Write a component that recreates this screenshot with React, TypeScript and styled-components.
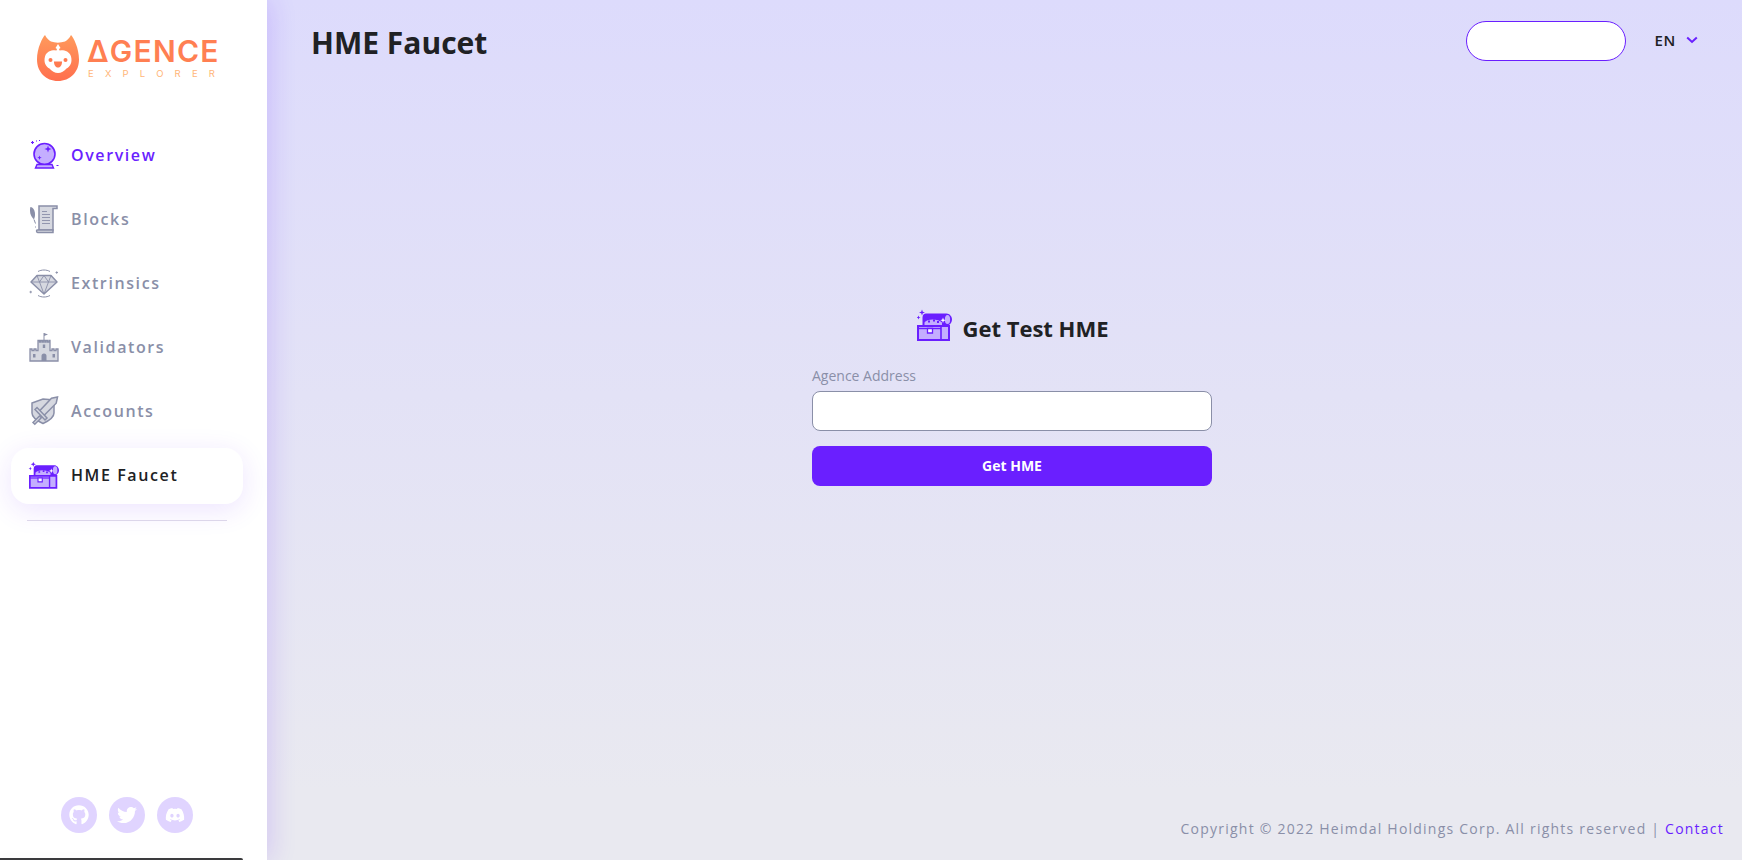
import React from "react";
import styled, { createGlobalStyle } from "styled-components";
import { FaDiscord, FaGithub, FaTwitter } from "react-icons/fa";

const PURPLE = "#6a1fff";
const PURPLE_FILL = "#c4aeff";
const GREY = "#8a8fa8";
const GREY_FILL = "#d6d8e0";

type Tone = { line: string; fill: string };
const purple: Tone = { line: PURPLE, fill: PURPLE_FILL };
const grey: Tone = { line: GREY, fill: GREY_FILL };

const BallIcon = ({ line, fill }: Tone) => (
  <svg width="30" height="30" viewBox="0 0 30 30">
    <circle cx="15.5" cy="14" r="10.5" fill={fill} stroke={line} strokeWidth="1.6" />
    <path d="M19 5.5l.9 2.6 2.6.9-2.6.9-.9 2.6-.9-2.6-2.6-.9 2.6-.9z" fill={line} />
    <path d="M10.5 15.5l.6 1.6 1.6.6-1.6.6-.6 1.6-.6-1.6-1.6-.6 1.6-.6z" fill={line} />
    <path d="M8 24.5h15l1.5 3.5h-18z" fill={fill} stroke={line} strokeWidth="1.4" />
    <path d="M2 2.5h3M3.5 1v3M7 1h1M10 .5h1M27.5 25.5h2" stroke={line} strokeWidth="1.1" />
  </svg>
);

const ScrollIcon = ({ line, fill }: Tone) => (
  <svg width="30" height="30" viewBox="0 0 30 30">
    <path d="M10 2h18v2.500h-4V26H10z" fill={fill} stroke={line} strokeWidth="1.500" />
    <path d="M8 26h16v2.500H9.500A1.500 1.500 0 0 1 8 26z" fill={fill} stroke={line} strokeWidth="1.500" />
    <path d="M13 7.500h5M13 10.500h8M13 13.500h8M13 16.500h8M13 19.500h8" stroke={line} strokeWidth=".9" />
    <path d="M1.500 3c2.800.5 4.500 3.500 4.500 7.500 0 2-.5 3.500-1 5-2.200-2-4-5-4-8.500 0-1.500 0-3 .5-4z" fill={line} />
    <path d="M5 15.500l1.500 4M6 23h1" stroke={line} strokeWidth="1" />
  </svg>
);

const GemIcon = ({ line, fill }: Tone) => (
  <svg width="30" height="30" viewBox="0 0 30 30">
    <path d="M8 7.500h14l6 6.500-13 12L2 14z" fill={fill} stroke={line} strokeWidth="1.500" strokeLinejoin="round" />
    <path d="M2 14h26M10.500 14L15 26l4.500-12M8 7.500l2.500 6.500L15 7.500l4.500 6.500L22 7.500" fill="none" stroke={line} strokeWidth=".9" />
    <path d="M9 3.500c3.500-2 8.500-2 12 0M9 27.500c3.500 2 8.500 2 12 0" fill="none" stroke={line} strokeWidth="1" />
    <path d="M26.500 4.500h2.500M27.700 3.300v2.500M.5 24h2.500M1.700 22.800v2.500" stroke={line} strokeWidth=".9" />
  </svg>
);

const CastleIcon = ({ line, fill }: Tone) => (
  <svg width="30" height="30" viewBox="0 0 30 30">
    <path d="M1 17v12h28V17h-2v1.500h-2V17h-2v1.500h-2V8.500h-1V10h-1.500V8.500H17V10h-1.200V8.500h-1.500V10h-1.200V8.500h-1.500V10H10.500V8.500H9v10H7V17H5v1.500H3V17z" fill={fill} stroke={line} strokeWidth="1.300" />
    <path d="M15 1v7" stroke={line} strokeWidth="1" />
    <path d="M15 1l4 1.500-4 1.500z" fill={line} />
    <path d="M12.500 29v-5a2.500 2.500 0 0 1 5 0v5zM4 22h2.500v3.500H4zM23.500 22H26v3.500h-2.500zM13.800 12.500h2.400v3.500h-2.400z" fill={line} />
  </svg>
);

const ShieldIcon = ({ line, fill }: Tone) => (
  <svg width="30" height="30" viewBox="0 0 30 30">
    <path d="M3 7L14 3l11 1v13c0 4.500-5.500 8-11 10.500C8.500 25 3 22 3 17z" fill={fill} stroke={line} strokeWidth="1.500" />
    <path d="M28.500 1l-1.300 6.200L14 20.500 9.500 16 22.500 2.300z" fill={fill} stroke={line} strokeWidth="1.500" />
    <path d="M6 13.500l2-2 10 10.500-2 2z" fill={fill} stroke={line} strokeWidth="1.500" />
    <path d="M10.500 20L4 26.500l1.800 1.800 6.500-6.500z" fill={fill} stroke={line} strokeWidth="1.500" />
  </svg>
);

const ChestIcon = ({ line, fill }: Tone) => (
  <svg width="100%" height="100%" viewBox="0 0 35 32">
    <path d="M5.500 8.500c0-2.500 1.500-4 3.500-4h20.500c3 0 5.500 3 5.500 6s-2.500 6-5.500 6H5.500z" fill={line} />
    <ellipse cx="30.500" cy="10.500" rx="2.600" ry="4.600" fill={fill} />
    <path d="M7.500 13.500c2-4 14-4 17.500 0v3H7.500z" fill={fill} />
    <path d="M11 11.500h2v2h-2zM16 10.500h2v2h-2zM20 12h2v2h-2z" fill={line} />
    <path d="M1 17h31v14H1z" fill={fill} stroke={line} strokeWidth="2" />
    <path d="M24 17v14" stroke={line} strokeWidth="1.600" />
    <path d="M1 19.500h23" stroke={line} strokeWidth="1.400" />
    <path d="M10.500 19.500h5v4.500h-5z" fill="#fff" stroke={line} strokeWidth="1.300" />
    <path d="M5 .5l.8 2.200 2.200.8-2.200.8L5 6.500l-.8-2.200-2.200-.8 2.200-.8zM1.500 6.500l.6 1.500 1.400.5-1.400.5-.6 1.500-.6-1.500L-.5 8.500l1.400-.5z" fill={line} />
    <path d="M26 8.500l.7 2 2 .7-2 .7-.7 2-.7-2-2-.7 2-.7z" fill="#fff" />
  </svg>
);

const navItems = [
  { label: "Overview", Icon: BallIcon, tone: purple, state: "current" },
  { label: "Blocks", Icon: ScrollIcon, tone: grey, state: "idle" },
  { label: "Extrinsics", Icon: GemIcon, tone: grey, state: "idle" },
  { label: "Validators", Icon: CastleIcon, tone: grey, state: "idle" },
  { label: "Accounts", Icon: ShieldIcon, tone: grey, state: "idle" },
  { label: "HME Faucet", Icon: ChestIcon, tone: purple, state: "active" },
];

const App = () => {
  return (
    <Page>
      <GlobalStyle />
      <Sidebar>
        <LogoRow>
          <svg width="42" height="46" viewBox="0 0 42 46">
            <defs>
              <linearGradient id="catFill" x1="0" y1="0" x2="0" y2="1">
                <stop offset="0" stopColor="#ff9a5c" />
                <stop offset="1" stopColor="#ff6f4e" />
              </linearGradient>
            </defs>
            <path d="M8 0c1.500 3 4 5.500 6 6.500 4 1.500 9.500 1.500 14 0 2-1 4.500-3.500 6-6.500 2.500 2.500 8 13 8 24.500C42 37 33 46 21 46S0 37 0 24.500C0 13 5.500 2.500 8 0z" fill="url(#catFill)" />
            <path d="M21 16c3-1.500 11-1 13 5.500 1.500 5.500-.5 10-4.500 12-2 2.500-5.500 4.500-8.500 4.500s-6.500-2-8.500-4.500c-4-2-6-6.500-4.500-12C10 15 18 14.500 21 16z" fill="#fff" />
            <path d="M21 9l2.500 4-1.500 1 1 3-2 2-2-2 1-3-1.500-1z" fill="#fff" />
            <circle cx="13.500" cy="25" r="2" fill="#ff7a50" />
            <circle cx="28.500" cy="25" r="2" fill="#ff7a50" />
            <path d="M17 26.500h8c0 4-2 6-4 6s-4-2-4-6z" fill="#ff7a50" />
          </svg>
          <Wordmark>
            <BrandName>ΔGENCE</BrandName>
            <BrandSub>EXPLORER</BrandSub>
          </Wordmark>
        </LogoRow>
        <Nav>
          {navItems.map(({ label, Icon, tone, state }) => (
            <NavRow key={label} $state={state}>
              <NavIcon>
                <Icon {...tone} />
              </NavIcon>
              {label}
            </NavRow>
          ))}
        </Nav>
        <Divider />
        <Socials>
          <SocialLink><FaGithub /></SocialLink>
          <SocialLink><FaTwitter /></SocialLink>
          <SocialLink><FaDiscord /></SocialLink>
        </Socials>
        <BottomStrip />
      </Sidebar>
      <Main>
        <Header>
          <Title>HME Faucet</Title>
          <HeaderRight>
            <WalletPill />
            <LangSwitch>
              EN
              <svg width="12" height="8" viewBox="0 0 12 8">
                <path d="M1.200 1.500L6 6l4.800-4.500" fill="none" stroke={PURPLE} strokeWidth="2" />
              </svg>
            </LangSwitch>
          </HeaderRight>
        </Header>
        <Center>
          <FaucetForm>
            <FormHeading>
              <HeadingIcon>
                <ChestIcon {...purple} />
              </HeadingIcon>
              Get Test HME
            </FormHeading>
            <FieldLabel>Agence Address</FieldLabel>
            <AddressInput />
            <SubmitButton>Get HME</SubmitButton>
          </FaucetForm>
        </Center>
        <Footer>
          Copyright © 2022 Heimdal Holdings Corp. All rights reserved | <FooterLink>Contact</FooterLink>
        </Footer>
      </Main>
    </Page>
  );
};

const GlobalStyle = createGlobalStyle`
  html, body {
    margin: 0;
    height: 100%;
    overflow: hidden;
  }
  body {
    font-family: "Open Sans", "Liberation Sans", sans-serif;
  }
`;

const Page = styled.div`
  display: flex;
  width: 1742px;
  height: 860px;
  background: linear-gradient(180deg, #dddbfc 0%, #e9e9f0 92%);
`;

const Sidebar = styled.aside`
  position: relative;
  z-index: 1;
  width: 267px;
  flex-shrink: 0;
  display: flex;
  flex-direction: column;
  background: #fff;
  box-shadow: 4px 0 24px rgba(106, 31, 255, 0.16);
`;

const LogoRow = styled.div`
  display: flex;
  align-items: flex-start;
  gap: 8px;
  height: 93px;
  padding: 35px 0 0 37px;
`;

const Wordmark = styled.div`
  display: flex;
  flex-direction: column;
`;

const BrandName = styled.span`
  font-family: "Inter", sans-serif;
  font-size: 30px;
  font-weight: 600;
  line-height: 33px;
  letter-spacing: 1.200px;
  color: #ff7f52;
`;

const BrandSub = styled.span`
  font-family: "Inter", sans-serif;
  font-size: 9.5px;
  line-height: 12px;
  margin: 0 0 0 1px;
  letter-spacing: 11.200px;
  color: #ffb678;
`;

const Nav = styled.nav`
  display: flex;
  flex-direction: column;
  gap: 8px;
`;

const NavRow = styled.a<{ $state: string }>`
  display: flex;
  align-items: center;
  gap: 12px;
  height: 56px;
  width: 232px;
  margin-left: 11px;
  padding: 0 0 2px 18px;
  box-sizing: border-box;
  border-radius: 18px;
  font-size: 16px;
  font-weight: 600;
  letter-spacing: 1.600px;
  color: ${({ $state }) => ($state === "current" ? PURPLE : $state === "active" ? "#202124" : GREY)};
  background: #fff;
  box-shadow: ${({ $state }) => ($state === "active" ? "0 6px 28px rgba(106, 31, 255, 0.12)" : "none")};
`;

const NavIcon = styled.span`
  display: flex;
  width: 30px;
  height: 30px;
  align-items: center;
  justify-content: center;
  flex-shrink: 0;

  svg {
    width: 30px;
    height: 30px;
    overflow: visible;
  }
`;

const Divider = styled.hr`
  width: 200px;
  margin: 16px 0 0 27px;
  border: 0;
  border-top: 1px solid #dcd6ea;
`;

const Socials = styled.div`
  display: flex;
  justify-content: center;
  gap: 12px;
  margin-top: auto;
  margin-right: 14px;
  padding-bottom: 25px;
`;

const SocialLink = styled.a`
  display: flex;
  align-items: center;
  justify-content: center;
  width: 36px;
  height: 36px;
  border-radius: 50%;
  background: #e0d4ff;
  color: #fff;
  font-size: 20px;
`;

const BottomStrip = styled.div`
  width: 243px;
  height: 2px;
  background: #3a3a3c;
  border-top-right-radius: 2px;
  box-shadow: 0 -3px 8px rgba(0, 0, 0, 0.06);
`;

const Main = styled.main`
  flex: 1;
  display: flex;
  flex-direction: column;
  min-width: 0;
`;

const Header = styled.header`
  display: flex;
  align-items: center;
  justify-content: space-between;
  height: 82px;
  padding: 0 44px 0 44px;
  flex-shrink: 0;
`;

const Title = styled.h1`
  margin: 2px 0 0;
  font-size: 30px;
  font-weight: 700;
  color: #202124;
`;

const HeaderRight = styled.div`
  display: flex;
  align-items: center;
  gap: 28px;
`;

const WalletPill = styled.div`
  width: 160px;
  height: 40px;
  box-sizing: border-box;
  border: 1px solid ${PURPLE};
  border-radius: 20px;
  background: #fff;
`;

const LangSwitch = styled.div`
  display: flex;
  align-items: center;
  gap: 10px;
  margin-bottom: 2px;
  font-size: 15px;
  font-weight: 600;
  letter-spacing: 0.7px;
  color: #202124;
`;

const Center = styled.div`
  flex: 1;
  display: flex;
  flex-direction: column;
  align-items: flex-start;
  padding: 230px 0 0 545px;
`;

const FaucetForm = styled.form`
  display: flex;
  flex-direction: column;
  width: 400px;
`;

const FormHeading = styled.h2`
  display: flex;
  align-items: center;
  justify-content: center;
  gap: 10px;
  height: 32px;
  margin: 0 0 22px;
  padding-left: 2px;
  font-size: 22px;
  font-weight: 700;
  color: #202124;
`;

const HeadingIcon = styled.span`
  display: block;
  width: 35px;
  height: 32px;
  margin-bottom: 6px;
`;

const FieldLabel = styled.label`
  font-size: 14px;
  line-height: 20px;
  color: ${GREY};
  margin-bottom: 5px;
`;

const AddressInput = styled.input`
  height: 40px;
  box-sizing: border-box;
  border: 1px solid ${GREY};
  border-radius: 8px;
  background: #fff;
  outline: none;
`;

const SubmitButton = styled.button`
  height: 40px;
  margin-top: 15px;
  padding-bottom: 3px;
  border: 0;
  border-radius: 8px;
  background: ${PURPLE};
  color: #fff;
  font-family: inherit;
  font-size: 14px;
  font-weight: 700;
`;

const Footer = styled.footer`
  padding: 0 18px 21px 0;
  font-size: 14px;
  line-height: 20px;
  letter-spacing: 1.230px;
  text-align: right;
  color: ${GREY};
`;

const FooterLink = styled.a`
  color: ${PURPLE};
`;

export default App;
